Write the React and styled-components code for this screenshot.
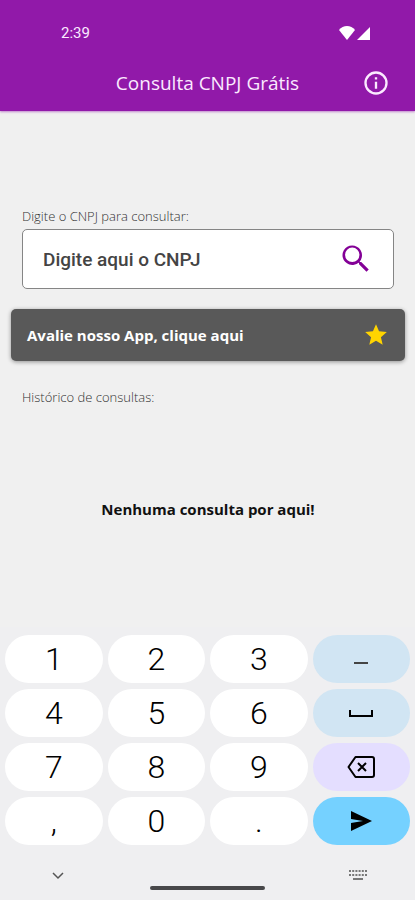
import React from "react"
import styled, { createGlobalStyle } from "styled-components"

const GlobalStyle = createGlobalStyle`
  * {
    box-sizing: border-box;
  }

  body {
    margin: 0;
    background: #f0f0f0;
    font-family: "Open Sans", sans-serif;
  }

  button {
    padding: 0;
    border: 0;
    background: none;
    color: inherit;
    font-family: inherit;
    cursor: pointer;
  }

  svg {
    display: block;
  }
`

const Screen = styled.div`
  display: flex;
  flex-direction: column;
  min-height: 100vh;
`

const Header = styled.header`
  background: #9119a9;
  color: #fbeaff;
  box-shadow: 0 1px 2px rgba(145, 25, 169, 0.5);
`

const StatusBar = styled.div`
  display: flex;
  align-items: center;
  justify-content: space-between;
  height: 56px;
  padding: 10px 45px 0 61px;
  font: 400 15px "Roboto", sans-serif;
`

const StatusIcons = styled.div`
  display: flex;
  gap: 2px;
`

const TitleBar = styled.div`
  display: grid;
  grid-template-columns: 28px 1fr 28px;
  align-items: center;
  height: 55px;
  padding: 0 25px 1px;
`

const Title = styled.h1`
  grid-column: 2;
  margin: 0;
  font-size: 19px;
  font-weight: 400;
  line-height: 28px;
  text-align: center;
`

const Content = styled.main`
  flex: 1;
  padding: 96px 10px 0 11px;
`

const Label = styled.label`
  display: block;
  padding: 0 11px;
  color: #333;
  font-size: 13px;
  font-weight: 300;
  line-height: 18px;
`

const HistoryTitle = styled(Label).attrs({ as: "h2" })`
  margin: 27px 0 0;
`

const SearchBox = styled.form`
  display: flex;
  align-items: center;
  height: 60px;
  margin: 4px 11px 20px;
  padding: 0 19px 0 20px;
  border: 1px solid #858585;
  border-radius: 5px;
  background: #fff;
`

const SearchInput = styled.input`
  flex: 1;
  min-width: 0;
  padding: 0;
  border: 0;
  outline: 0;
  background: none;
  color: #444;
  font: 500 19px "Roboto", sans-serif;

  &::placeholder {
    color: #444;
    opacity: 1;
  }
`

const RateButton = styled.button`
  display: flex;
  align-items: center;
  justify-content: space-between;
  width: 100%;
  height: 52px;
  padding: 0 16px;
  border-radius: 5px;
  background: #595959;
  box-shadow: 0 1px 4px rgba(0, 0, 0, 0.4);
  color: #fff;
  font-size: 15px;
  font-weight: 700;
`

const Empty = styled.p`
  margin: 93px 0 0;
  color: #111;
  font-size: 15px;
  font-weight: 700;
  line-height: 20px;
  text-align: center;
`

const Keyboard = styled.section`
  padding: 8px 5px 0;
  background: #efeff1;
`

const Keys = styled.div`
  display: grid;
  grid-template-columns: repeat(4, 1fr);
  gap: 6px 5px;
`

const Key = styled.button`
  display: flex;
  align-items: center;
  justify-content: center;
  height: 48px;
  border-radius: 24px;
  background: ${props => props.$background || "#fff"};
  color: #000;
  font-family: "Roboto", sans-serif;
  font-size: 32px;
  font-weight: 300;
`

const NavBar = styled.div`
  display: grid;
  grid-template-columns: 105px 1fr 105px;
  justify-items: center;
  height: 55px;
  padding-top: 24px;
`

const Handle = styled.div`
  align-self: end;
  width: 115px;
  height: 4px;
  margin-bottom: 10px;
  border-radius: 2px;
  background: #48484a;
`

const InfoIcon = () => (
  <svg width="28" height="28" viewBox="0 0 24 24" fill="currentColor">
    <path d="M11 7h2v2h-2zm0 4h2v6h-2zm1-9a10 10 0 1 0 0 20 10 10 0 0 0 0-20zm0 18a8 8 0 1 1 0-16 8 8 0 0 1 0 16z" />
  </svg>
)

const SearchIcon = () => (
  <svg width="36" height="36" viewBox="0 0 24 24" fill="#830096">
    <path d="M15.5 14h-.79l-.28-.27A6.5 6.5 0 1 0 13.73 14.43l.27.28v.79l5 4.99L20.49 19zm-6 0a4.8 4.8 0 1 1 0-9.6 4.8 4.8 0 0 1 0 9.6z" />
  </svg>
)

const StarIcon = () => (
  <svg width="26" height="26" viewBox="0 0 24 24" fill="#ffd400">
    <path d="M12 17.27 18.18 21l-1.64-7.03L22 9.24l-7.19-.61L12 2 9.19 8.63 2 9.24l5.46 4.73L5.82 21z" />
  </svg>
)

const MinusIcon = () => (
  <svg width="14" height="10" viewBox="0 0 14 10" fill="none" stroke="#444" strokeWidth="2">
    <path d="M0 9h14" />
  </svg>
)

const SpaceIcon = () => (
  <svg width="24" height="8" viewBox="0 0 24 8" fill="none" stroke="currentColor" strokeWidth="2">
    <path d="M1 1v6h22V1" />
  </svg>
)

const DeleteIcon = () => (
  <svg width="28" height="22" viewBox="0 0 28 22" fill="none" stroke="currentColor" strokeWidth="2">
    <path d="M8.5 1H25a2 2 0 0 1 2 2v16a2 2 0 0 1-2 2H8.5L1.5 11z" strokeLinejoin="round" />
    <path d="m11 7 8 8m0-8-8 8" />
  </svg>
)

const SendIcon = () => (
  <svg width="22" height="20" viewBox="0 0 22 20" fill="currentColor">
    <path d="M1 0 22 10 1 20v-8l12-2L1 8z" />
  </svg>
)

const KeyboardIcon = () => (
  <svg width="18" height="12" viewBox="0 0 18 12" fill="none" stroke="#777" strokeWidth="2">
    <path d="M0 2h18M0 6h18" strokeDasharray="2 1.2" />
    <path d="M4 10h10" />
  </svg>
)

const LIGHT_BLUE = "#d1e5f3"

const KEYS = [
  { label: "1" },
  { label: "2" },
  { label: "3" },
  { label: "Hífen", icon: <MinusIcon />, background: LIGHT_BLUE },
  { label: "4" },
  { label: "5" },
  { label: "6" },
  { label: "Espaço", icon: <SpaceIcon />, background: LIGHT_BLUE },
  { label: "7" },
  { label: "8" },
  { label: "9" },
  { label: "Apagar", icon: <DeleteIcon />, background: "#e4deff" },
  { label: "," },
  { label: "0" },
  { label: "." },
  { label: "Enviar", icon: <SendIcon />, background: "#75d1ff" },
]

const App = () => (
  <>
    <GlobalStyle />
    <Screen>
      <Header>
        <StatusBar>
          <span>2:39</span>
          <StatusIcons>
            <svg width="16" height="14" viewBox="0 0 16 14" fill="#fff">
              <path d="M8 14 0 4C4-1.2 12-1.2 16 4z" />
            </svg>
            <svg width="13" height="14" viewBox="0 0 13 14" fill="#fff">
              <path d="M13 1v13H0z" />
            </svg>
          </StatusIcons>
        </StatusBar>
        <TitleBar>
          <Title>Consulta CNPJ Grátis</Title>
          <button aria-label="Informações">
            <InfoIcon />
          </button>
        </TitleBar>
      </Header>
      <Content>
        <Label htmlFor="cnpj">Digite o CNPJ para consultar:</Label>
        <SearchBox onSubmit={e => e.preventDefault()}>
          <SearchInput id="cnpj" inputMode="numeric" placeholder="Digite aqui o CNPJ" />
          <button aria-label="Consultar">
            <SearchIcon />
          </button>
        </SearchBox>
        <RateButton>
          Avalie nosso App, clique aqui
          <StarIcon />
        </RateButton>
        <HistoryTitle>Histórico de consultas:</HistoryTitle>
        <Empty>Nenhuma consulta por aqui!</Empty>
      </Content>
      <Keyboard>
        <Keys>
          {KEYS.map(({ label, icon, background }) => (
            <Key key={label} $background={background} aria-label={label}>
              {icon || label}
            </Key>
          ))}
        </Keys>
        <NavBar>
          <svg width="12" height="12" viewBox="0 0 12 12" fill="none" stroke="#555" strokeWidth="1.5">
            <path d="m1 4 5 5 5-5" />
          </svg>
          <Handle />
          <KeyboardIcon />
        </NavBar>
      </Keyboard>
    </Screen>
  </>
)

export default App
